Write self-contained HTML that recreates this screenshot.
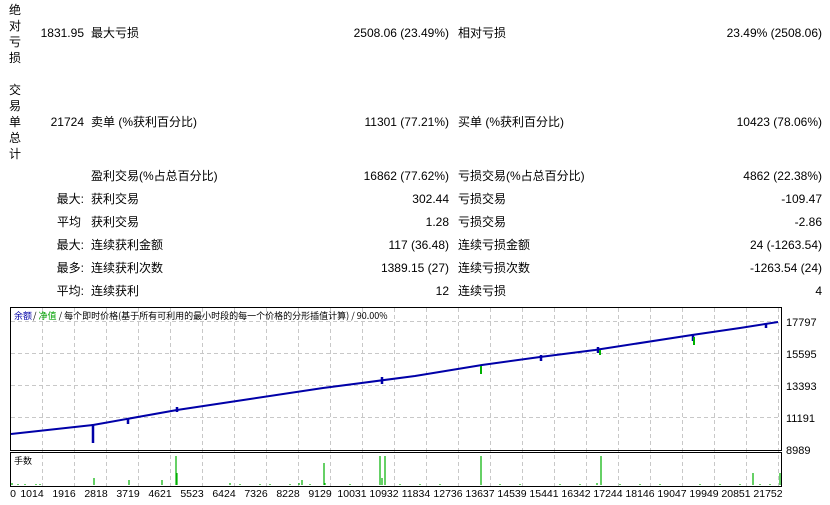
<!DOCTYPE html>
<html><head><meta charset="utf-8"><style>
body{margin:0;width:830px;height:505px;background:#fff;position:relative;overflow:hidden;font-family:"Liberation Sans","Noto Sans CJK SC",sans-serif;font-size:12px;color:#000}
.t{position:absolute;white-space:nowrap;line-height:14px}
.r{text-align:right}
.v{position:absolute;left:9px;width:13px;line-height:16px;font-size:12px}
</style></head><body>
<div class="v" style="top:2px">绝<br>对<br>亏<br>损</div>
<div class="v" style="top:82px">交<br>易<br>单<br>总<br>计</div>

<div class="t r" style="right:746px;top:26px">1831.95</div>
<div class="t" style="left:91px;top:26px">最大亏损</div>
<div class="t r" style="right:381px;top:26px">2508.06 (23.49%)</div>
<div class="t" style="left:458px;top:26px">相对亏损</div>
<div class="t r" style="right:8px;top:26px">23.49% (2508.06)</div>

<div class="t r" style="right:746px;top:115px">21724</div>
<div class="t" style="left:91px;top:115px">卖单 (%获利百分比)</div>
<div class="t r" style="right:381px;top:115px">11301 (77.21%)</div>
<div class="t" style="left:458px;top:115px">买单 (%获利百分比)</div>
<div class="t r" style="right:8px;top:115px">10423 (78.06%)</div>

<div class="t" style="left:91px;top:169px">盈利交易(%占总百分比)</div>
<div class="t r" style="right:381px;top:169px">16862 (77.62%)</div>
<div class="t" style="left:458px;top:169px">亏损交易(%占总百分比)</div>
<div class="t r" style="right:8px;top:169px">4862 (22.38%)</div>

<div class="t r" style="right:746px;top:192px">最大:</div>
<div class="t" style="left:91px;top:192px">获利交易</div>
<div class="t r" style="right:381px;top:192px">302.44</div>
<div class="t" style="left:458px;top:192px">亏损交易</div>
<div class="t r" style="right:8px;top:192px">-109.47</div>

<div class="t r" style="right:749px;top:215px">平均</div>
<div class="t" style="left:91px;top:215px">获利交易</div>
<div class="t r" style="right:381px;top:215px">1.28</div>
<div class="t" style="left:458px;top:215px">亏损交易</div>
<div class="t r" style="right:8px;top:215px">-2.86</div>

<div class="t r" style="right:746px;top:238px">最大:</div>
<div class="t" style="left:91px;top:238px">连续获利金额</div>
<div class="t r" style="right:381px;top:238px">117 (36.48)</div>
<div class="t" style="left:458px;top:238px">连续亏损金额</div>
<div class="t r" style="right:8px;top:238px">24 (-1263.54)</div>

<div class="t r" style="right:746px;top:261px">最多:</div>
<div class="t" style="left:91px;top:261px">连续获利次数</div>
<div class="t r" style="right:381px;top:261px">1389.15 (27)</div>
<div class="t" style="left:458px;top:261px">连续亏损次数</div>
<div class="t r" style="right:8px;top:261px">-1263.54 (24)</div>

<div class="t r" style="right:746px;top:284px">平均:</div>
<div class="t" style="left:91px;top:284px">连续获利</div>
<div class="t r" style="right:381px;top:284px">12</div>
<div class="t" style="left:458px;top:284px">连续亏损</div>
<div class="t r" style="right:8px;top:284px">4</div>

<svg style="position:absolute;left:0;top:0" width="830" height="505">
<g stroke="#c8c8c8" stroke-dasharray="4,3" stroke-width="1">
<path d="M42.5 308V486M74.5 308V486M106.5 308V486M138.5 308V486M170.5 308V486M202.5 308V486M234.5 308V486M266.5 308V486M298.5 308V486M330.5 308V486M362.5 308V486M394.5 308V486M426.5 308V486M458.5 308V486M490.5 308V486M522.5 308V486M554.5 308V486M586.5 308V486M618.5 308V486M650.5 308V486M682.5 308V486M714.5 308V486M746.5 308V486M778.5 308V486"/>
<path d="M11 321.5H781M11 353.5H781M11 385.5H781M11 417.5H781"/>
</g>
<polyline fill="none" stroke="#0000a8" stroke-width="2" points="11,434 93,425 177,410 250,399 323,388 415,376 482,365 540,357 595,350 692,335 740,328 778,322"/>
<g stroke="#0000a8" stroke-width="2.5"><path d="M93 424V443M128 419V424M177 407V412M382 377V384M541 355V361M598 347V353M693 334V341M766 323V328"/></g>
<g stroke="#00b000" stroke-width="2"><path d="M481 366V374M694 337V345M600 350V355"/></g>
<rect x="10.5" y="307.5" width="771" height="143" fill="none" stroke="#000"/>
<rect x="10.5" y="452.5" width="771" height="34" fill="none" stroke="#000"/>
<g stroke="#00b000" stroke-width="1.2">
<path d="M94 478V485M129 480V485M162 480V485M176 456V485M177 473V485M299 483V485M302 480V485M324 463V485M325 483V485M380 456V485M382 478V485M385 456V485M481 456V485M597 483V485M601 456V485M753 473V485M780 473V485M12 483V485M18 484V485M25 484V485M36 484V485M40 484V485M230 483V485M240 484V485M260 484V485M270 484V485M290 484V485M310 484V485M350 484V485M400 484V485M420 484V485M440 484V485M500 484V485M520 484V485M560 484V485M580 484V485M620 484V485M640 484V485M660 484V485M700 484V485M720 484V485M740 484V485M760 484V485M770 484V485"/>
</g>
<text x="14" y="319" font-size="9" fill="#0000a8" font-family="Noto Sans CJK SC,sans-serif">余额</text>
<text x="33" y="319" font-size="9" fill="#000" font-family="Noto Sans CJK SC,sans-serif">/ <tspan fill="#00a000">净值</tspan> / 每个即时价格(基于所有可利用的最小时段的每一个价格的分形插值计算) / 90.00%</text>
<text x="14" y="464" font-size="9" font-family="Noto Sans CJK SC,sans-serif">手数</text>
<g font-size="11" font-family="Liberation Sans,sans-serif">
<text x="786" y="326">17797</text><text x="786" y="358">15595</text><text x="786" y="390">13393</text><text x="786" y="422">11191</text><text x="786" y="454">8989</text>
</g>
<g font-size="10.5" font-family="Liberation Sans,sans-serif" text-anchor="middle">
<text x="13" y="497">0</text><text x="32" y="497">1014</text><text x="64" y="497">1916</text><text x="96" y="497">2818</text><text x="128" y="497">3719</text><text x="160" y="497">4621</text><text x="192" y="497">5523</text><text x="224" y="497">6424</text><text x="256" y="497">7326</text><text x="288" y="497">8228</text><text x="320" y="497">9129</text><text x="352" y="497">10031</text><text x="384" y="497">10932</text><text x="416" y="497">11834</text><text x="448" y="497">12736</text><text x="480" y="497">13637</text><text x="512" y="497">14539</text><text x="544" y="497">15441</text><text x="576" y="497">16342</text><text x="608" y="497">17244</text><text x="640" y="497">18146</text><text x="672" y="497">19047</text><text x="704" y="497">19949</text><text x="736" y="497">20851</text><text x="768" y="497">21752</text>
</g>
</svg>
</body></html>
